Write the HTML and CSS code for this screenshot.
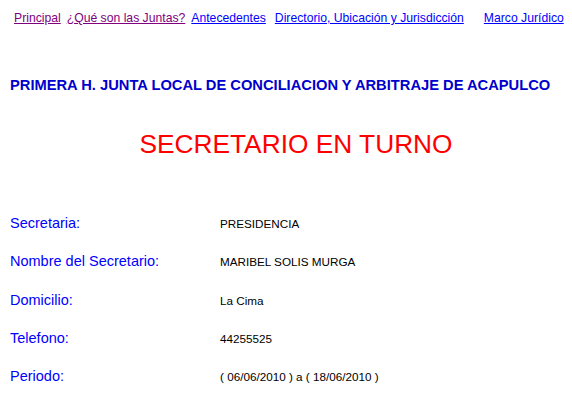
FILE: index.html
```html
<!DOCTYPE html>
<html lang="es">
<head>
<meta charset="utf-8">
<link rel="stylesheet" href="styles.css">
</head>
<body>
<nav class="nav">
  <a class="visited" href="#">Principal</a>
  <a class="visited" href="#">¿Qué son las Juntas?</a>
  <a href="#">Antecedentes</a>
  <a class="dir" href="#">Directorio, Ubicación y Jurisdicción</a>
  <a class="last" href="#">Marco Jurídico</a>
</nav>
<h1 class="org">PRIMERA H. JUNTA LOCAL DE CONCILIACION Y ARBITRAJE DE ACAPULCO</h1>
<h2 class="heading">SECRETARIO EN TURNO</h2>
<div class="info">
  <div class="row"><span class="label">Secretaria:</span><span class="value">PRESIDENCIA</span></div>
  <div class="row"><span class="label">Nombre del Secretario:</span><span class="value">MARIBEL SOLIS MURGA</span></div>
  <div class="row"><span class="label">Domicilio:</span><span class="value">La Cima</span></div>
  <div class="row"><span class="label">Telefono:</span><span class="value">44255525</span></div>
  <div class="row"><span class="label">Periodo:</span><span class="value">( 06/06/2010 ) a ( 18/06/2010 )</span></div>
</div>
</body>
</html>
```
FILE: styles.css
```css
body {
  margin: 0;
  background: #fff;
  font-family: "Liberation Sans", Arial, sans-serif;
}
.nav {
  display: flex;
  gap: 6px;
  padding: 11px 0 0 14px;
  font-size: 12.2px;
  line-height: 14px;
}
.nav a { color: #0000ff; }
.nav a.visited { color: #800080; }
.nav a.dir { margin-left: 3px; }
.nav a.last { margin-left: 14px; }
.org {
  margin: 0;
  padding: 52px 0 0 10px;
  font-size: 14.7px;
  line-height: 16px;
  font-weight: bold;
  color: #0000cc;
}
.heading {
  margin: 0;
  padding: 36px 0 0 20px;
  text-align: center;
  font-weight: normal;
  font-size: 26.3px;
  line-height: 30px;
  color: #ff0000;
  font-family: "Liberation Sans", Arial, sans-serif;
}
.info {
  padding: 56px 0 0 10px;
}
.row {
  display: flex;
  align-items: baseline;
  height: 38.25px;
}
.label {
  width: 210px;
  font-size: 14.5px;
  color: #0000ff;
}
.value {
  font-size: 11.7px;
  color: #000;
}
```
